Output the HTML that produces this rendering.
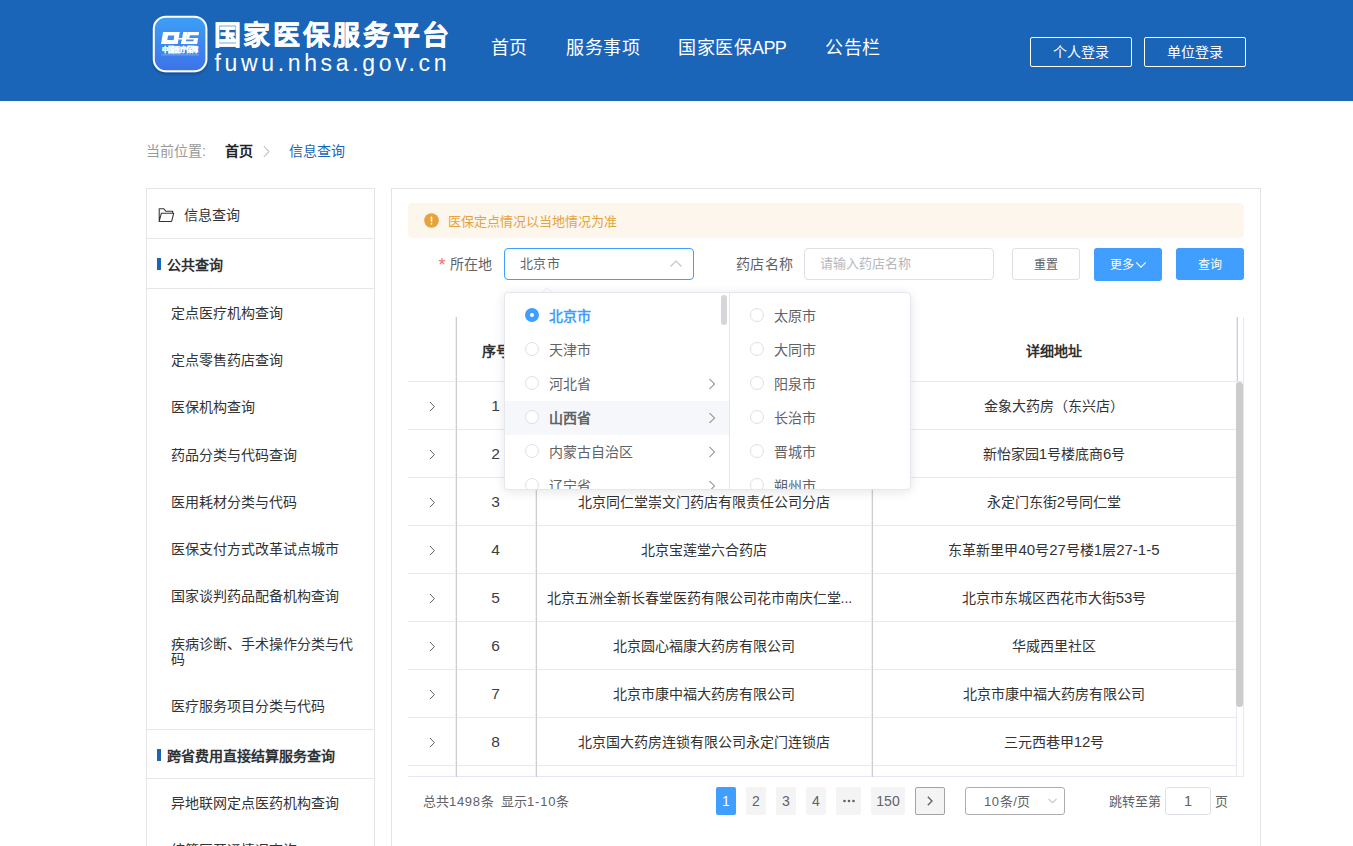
<!DOCTYPE html>
<html lang="zh-CN">
<head>
<meta charset="utf-8">
<title>国家医保服务平台</title>
<style>
*{box-sizing:border-box;margin:0;padding:0}
html,body{width:1353px;height:846px;overflow:hidden;background:#fff}
body{font-family:"Liberation Sans",sans-serif;color:#333;position:relative;font-size:14px}
.abs{position:absolute}
.t{position:absolute;white-space:nowrap;line-height:20px;height:20px}
/* header */
#hdr{left:0;top:0;width:1353px;height:101px;background:#1b65b9}
.nav{color:#fff;font-size:18px;font-weight:500;line-height:24px;height:24px;top:36px;letter-spacing:.5px}
.lbtn{top:37px;height:30px;width:102px;border:1px solid #fff;border-radius:2px;color:#fff;font-size:14px;line-height:28px;text-align:center}
/* sidebar */
#side{left:146px;top:188px;width:229px;height:700px;border:1px solid #e4e4e4;background:#fff}
.shl{position:absolute;left:0;width:227px;height:1px;background:#e6e6e6}
.sbar{position:absolute;left:10px;width:4px;height:12px;background:#1b65b9}
.sti{position:absolute;left:20px;font-size:14px;font-weight:bold;color:#303133;white-space:nowrap;line-height:20px}
.mi{position:absolute;left:24px;width:185px;font-size:14px;color:#333;line-height:15px}
/* main */
#main{left:391px;top:188px;width:870px;height:700px;border:1px solid #e4e4e4;background:#fff}
#alert{left:408px;top:203px;width:836px;height:35px;background:#fdf6ec;border-radius:4px}
.inp{top:248px;height:32px;border:1px solid #dcdfe6;border-radius:4px;background:#fff}
.btn{top:248px;height:32px;width:68px;border-radius:3px;font-size:12px;font-weight:500;line-height:34px;text-align:center;color:#fff;background:#409eff}
/* table */
.hl{position:absolute;left:408px;width:828px;height:1px;background:#e6e9f2}
.vl{position:absolute;top:317px;height:460px;width:1px;background:#cdcdcf;box-shadow:-1px 0 0 #eceff6}
.c{position:absolute;height:20px;line-height:20px;font-size:14px;color:#333;text-align:center;white-space:nowrap;overflow:hidden}
.c1{left:456px;width:79px;color:#3c3e42;font-size:15.5px}
.c2{left:536px;width:335px}
.c3{left:872px;width:364px}
.n{font-size:15px;line-height:1}
.th{font-weight:bold;color:#303133;font-size:14px}
.ex{position:absolute;left:428px;width:9px;height:13px}
/* dropdown */
#dd{left:504px;top:292px;width:407px;height:198px;background:#fff;border:1px solid #e4e7ed;border-radius:4px;box-shadow:0 2px 12px 0 rgba(0,0,0,.1);overflow:hidden}
.row{position:absolute;left:0;height:34px;width:224px}
.rad{position:absolute;width:14px;height:14px;border:1px solid #dcdfe6;border-radius:50%;background:#fff}
.dl{position:absolute;font-size:14px;color:#606266;line-height:20px;white-space:nowrap}
.chev{position:absolute;width:8px;height:12px}
/* pagination */
.pg{top:787px;height:28px;min-width:20px;border-radius:2px;background:#f4f4f5;color:#606266;font-size:14px;line-height:28px;text-align:center}
</style>
</head>
<body>
<!-- ================= HEADER ================= -->
<div id="hdr" class="abs"></div>
<!-- logo icon -->
<svg class="abs" style="left:150px;top:13px" width="62" height="64" viewBox="0 0 62 64">
  <defs>
    <linearGradient id="lg" x1="0" y1="0" x2="0" y2="1">
      <stop offset="0" stop-color="#3d9ff6"/>
      <stop offset="1" stop-color="#3c72e8"/>
    </linearGradient>
    <filter id="sh" x="-20%" y="-20%" width="140%" height="150%">
      <feGaussianBlur in="SourceAlpha" stdDeviation="1.5"/>
      <feOffset dy="2"/>
      <feComponentTransfer><feFuncA type="linear" slope="0.25"/></feComponentTransfer>
      <feMerge><feMergeNode/><feMergeNode in="SourceGraphic"/></feMerge>
    </filter>
  </defs>
  <rect x="3.8" y="3.8" width="52.6" height="54.4" rx="12" ry="12" fill="url(#lg)" stroke="#fff" stroke-width="2" filter="url(#sh)"/>
  <g fill="#fff" transform="translate(11,30.9) skewX(-10)">
    <path fill-rule="evenodd" d="M0 0H16.7V-11.9H0ZM5.6-3.9H11.9V-8.3H5.6Z"/>
    <rect x="20.1" y="-11.9" width="4.4" height="11.9"/>
    <rect x="16.7" y="-6" width="19.3" height="1.7"/>
    <rect x="24.5" y="-11.9" width="11.5" height="3.2"/>
    <rect x="24.5" y="-8.8" width="2.8" height="3"/>
    <rect x="32" y="-6" width="4" height="6"/>
    <rect x="20.1" y="-2.7" width="15.9" height="2.7"/>
  </g>
  <text x="30.2" y="39.4" font-family="Liberation Sans, sans-serif" font-size="6.3" font-weight="bold" fill="#fff" stroke="#fff" stroke-width=".2" text-anchor="middle">中国医疗保障</text>
  <rect x="11.2" y="41.3" width="37.8" height="1.1" fill="#fff" opacity=".28"/>
</svg>
<div class="t" style="left:213.5px;top:17.5px;font-size:27px;line-height:36px;height:36px;font-weight:bold;color:#fff;letter-spacing:2.85px;-webkit-text-stroke:.45px #fff">国家医保服务平台</div>
<div class="t" style="left:214.5px;top:49px;font-size:23px;line-height:28px;height:28px;color:#fff;letter-spacing:3.65px">fuwu.nhsa.gov.cn</div>
<div class="t nav" style="left:490.5px">首页</div>
<div class="t nav" style="left:566px">服务事项</div>
<div class="t nav" style="left:678px">国家医保<span style="letter-spacing:-.6px">APP</span></div>
<div class="t nav" style="left:825px">公告栏</div>
<div class="abs lbtn" style="left:1030px">个人登录</div>
<div class="abs lbtn" style="left:1144px">单位登录</div>

<!-- ================= BREADCRUMB ================= -->
<div class="t" style="left:146px;top:141px;color:#999;font-size:14px">当前位置:</div>
<div class="t" style="left:225px;top:141px;color:#222;font-size:14px;font-weight:bold">首页</div>
<svg class="abs" style="left:262px;top:145px" width="9" height="13" viewBox="0 0 9 13"><path d="M1.8 1.2 7 6.5 1.8 11.8" fill="none" stroke="#c0c4cc" stroke-width="1.1"/></svg>
<div class="t" style="left:289px;top:141px;color:#1b65b9;font-size:14px">信息查询</div>

<!-- ================= SIDEBAR ================= -->
<div id="side" class="abs">
  <svg class="abs" style="left:11px;top:19px" width="17" height="16" viewBox="0 0 17 16"><path d="M1.2 13.4V.7h4.4l2.4 2.6h6.7v2M1.2 13.4l2.1-8.1h12.4l-2.1 8.1z" fill="none" stroke="#333" stroke-width="1.05" stroke-linejoin="round"/></svg>
  <div class="t" style="left:37px;top:16px;color:#333;font-size:14px">信息查询</div>
  <div class="shl" style="top:49px"></div>
  <div class="sbar" style="top:69px"></div>
  <div class="sti" style="top:66px">公共查询</div>
  <div class="shl" style="top:99px"></div>
  <div class="mi" style="top:117px">定点医疗机构查询</div>
  <div class="mi" style="top:164px">定点零售药店查询</div>
  <div class="mi" style="top:211px">医保机构查询</div>
  <div class="mi" style="top:259px">药品分类与代码查询</div>
  <div class="mi" style="top:306px">医用耗材分类与代码</div>
  <div class="mi" style="top:353px">医保支付方式改革试点城市</div>
  <div class="mi" style="top:400px">国家谈判药品配备机构查询</div>
  <div class="mi" style="top:448px">疾病诊断、手术操作分类与代码</div>
  <div class="mi" style="top:510px">医疗服务项目分类与代码</div>
  <div class="shl" style="top:540px"></div>
  <div class="sbar" style="top:560px"></div>
  <div class="sti" style="top:557px">跨省费用直接结算服务查询</div>
  <div class="shl" style="top:589px"></div>
  <div class="mi" style="top:607px">异地联网定点医药机构查询</div>
  <div class="mi" style="top:654px">统筹区开通情况查询</div>
</div>

<!-- ================= MAIN PANEL ================= -->
<div id="main" class="abs"></div>
<div id="alert" class="abs"></div>
<svg class="abs" style="left:424.4px;top:213.4px" width="15" height="15" viewBox="0 0 15 15"><circle cx="7.5" cy="7.5" r="7.3" fill="#e6a23c"/><rect x="6.75" y="3.5" width="1.5" height="5.4" rx=".7" fill="#fff" opacity=".9"/><circle cx="7.5" cy="10.8" r=".9" fill="#fff" opacity=".9"/></svg>
<div class="t" style="left:448px;top:212px;color:#e6a23c;font-size:13px">医保定点情况以当地情况为准</div>

<!-- form row -->
<div class="t" style="left:438.5px;top:255px;color:#f56c6c;font-size:18px">*</div>
<div class="t" style="left:449.5px;top:254px;color:#606266;font-size:14px;letter-spacing:.4px">所在地</div>
<div class="abs inp" style="left:504px;width:190px;border-color:#409eff"></div>
<div class="t" style="left:520px;top:254px;color:#606266;font-size:13px;letter-spacing:.3px">北京市</div>
<svg class="abs" style="left:669px;top:259px" width="14" height="9" viewBox="0 0 14 9"><path d="M1.5 7.5 7 2l5.5 5.5" fill="none" stroke="#c0c4cc" stroke-width="1.1"/></svg>
<div class="t" style="left:736px;top:254px;color:#606266;font-size:14px;letter-spacing:.4px">药店名称</div>
<div class="abs inp" style="left:804px;width:190px"></div>
<div class="t" style="left:820px;top:254px;color:#b4b7be;font-size:13px">请输入药店名称</div>
<div class="abs btn" style="left:1012px;background:#fff;border:1px solid #dcdfe6;color:#606266;line-height:32px">重置</div>
<div class="abs btn" style="left:1094px;height:33px;padding-right:12px">更多</div>
<svg class="abs" style="left:1134.6px;top:260.6px" width="12" height="8" viewBox="0 0 12 8"><path d="M1.2 1.3 6 6.2l4.8-4.9" fill="none" stroke="#fff" stroke-width="1.1"/></svg>
<div class="abs btn" style="left:1176px">查询</div>

<!-- ================= TABLE ================= -->
<div class="hl" style="top:381px;width:836px"></div>
<div class="hl" style="top:429px"></div>
<div class="hl" style="top:477px"></div>
<div class="hl" style="top:525px"></div>
<div class="hl" style="top:573px"></div>
<div class="hl" style="top:621px"></div>
<div class="hl" style="top:669px"></div>
<div class="hl" style="top:717px"></div>
<div class="hl" style="top:765px"></div>
<div class="hl" style="top:776px;width:836px"></div>
<div class="vl" style="left:456px"></div>
<div class="vl" style="left:536px"></div>
<div class="vl" style="left:872px"></div>
<div class="vl" style="left:1237px;height:64px"></div>
<div class="vl" style="left:1236px;top:382px;height:394px;background:#e6e9f2;box-shadow:none"></div>
<div class="vl" style="left:1243px;background:#e6e9f2;box-shadow:none"></div>
<div class="abs" style="left:1236px;top:382px;width:7px;height:325px;background:#cccccc;border-radius:3.5px"></div>

<div class="c c1 th" style="top:341px">序号</div>
<div class="c c2 th" style="top:341px">药店名称</div>
<div class="c c3 th" style="top:341px">详细地址</div>

<svg class="ex" style="top:400px" viewBox="0 0 9 13"><path d="M1.9 2 6.4 6.6 1.9 11.2" fill="none" stroke="#606266" stroke-width="1"/></svg>
<svg class="ex" style="top:448px" viewBox="0 0 9 13"><path d="M1.9 2 6.4 6.6 1.9 11.2" fill="none" stroke="#606266" stroke-width="1"/></svg>
<svg class="ex" style="top:496px" viewBox="0 0 9 13"><path d="M1.9 2 6.4 6.6 1.9 11.2" fill="none" stroke="#606266" stroke-width="1"/></svg>
<svg class="ex" style="top:544px" viewBox="0 0 9 13"><path d="M1.9 2 6.4 6.6 1.9 11.2" fill="none" stroke="#606266" stroke-width="1"/></svg>
<svg class="ex" style="top:592px" viewBox="0 0 9 13"><path d="M1.9 2 6.4 6.6 1.9 11.2" fill="none" stroke="#606266" stroke-width="1"/></svg>
<svg class="ex" style="top:640px" viewBox="0 0 9 13"><path d="M1.9 2 6.4 6.6 1.9 11.2" fill="none" stroke="#606266" stroke-width="1"/></svg>
<svg class="ex" style="top:688px" viewBox="0 0 9 13"><path d="M1.9 2 6.4 6.6 1.9 11.2" fill="none" stroke="#606266" stroke-width="1"/></svg>
<svg class="ex" style="top:736px" viewBox="0 0 9 13"><path d="M1.9 2 6.4 6.6 1.9 11.2" fill="none" stroke="#606266" stroke-width="1"/></svg>

<div class="c c1" style="top:396px">1</div>
<div class="c c1" style="top:444px">2</div>
<div class="c c1" style="top:492px">3</div>
<div class="c c1" style="top:540px">4</div>
<div class="c c1" style="top:588px">5</div>
<div class="c c1" style="top:636px">6</div>
<div class="c c1" style="top:684px">7</div>
<div class="c c1" style="top:732px">8</div>

<div class="c c2" style="top:396px">北京金象大药房医药连锁有限责任公司东兴店</div>
<div class="c c2" style="top:444px">北京新怡家园大药房有限公司</div>
<div class="c c2" style="top:492px">北京同仁堂崇文门药店有限责任公司分店</div>
<div class="c c2" style="top:540px">北京宝莲堂六合药店</div>
<div class="c c2" style="top:588px;left:546.5px;width:320px;text-align:left">北京五洲全新长春堂医药有限公司花市南庆仁堂...</div>
<div class="c c2" style="top:636px">北京圆心福康大药房有限公司</div>
<div class="c c2" style="top:684px">北京市康中福大药房有限公司</div>
<div class="c c2" style="top:732px">北京国大药房连锁有限公司永定门连锁店</div>

<div class="c c3" style="top:396px">金象大药房（东兴店）</div>
<div class="c c3" style="top:444px">新怡家园<span class="n">1</span>号楼底商<span class="n">6</span>号</div>
<div class="c c3" style="top:492px">永定门东街<span class="n">2</span>号同仁堂</div>
<div class="c c3" style="top:540px">东革新里甲<span class="n">40</span>号<span class="n">27</span>号楼<span class="n">1</span>层<span class="n">27-1-5</span></div>
<div class="c c3" style="top:588px">北京市东城区西花市大街<span class="n">53</span>号</div>
<div class="c c3" style="top:636px">华威西里社区</div>
<div class="c c3" style="top:684px">北京市康中福大药房有限公司</div>
<div class="c c3" style="top:732px">三元西巷甲<span class="n">12</span>号</div>

<!-- ================= PAGINATION ================= -->
<div class="t" style="left:423px;top:792px;color:#606266;font-size:13px">总共<span style="letter-spacing:.7px">1498</span>条&nbsp; 显示<span style="letter-spacing:.8px">1-10</span>条</div>
<div class="abs pg" style="left:716px;width:20px;background:#409eff;color:#fff">1</div>
<div class="abs pg" style="left:746px;width:20px">2</div>
<div class="abs pg" style="left:776px;width:20px">3</div>
<div class="abs pg" style="left:806px;width:20px">4</div>
<div class="abs pg" style="left:836px;width:25px"></div>
<svg class="abs" style="left:842px;top:799px" width="14" height="4" viewBox="0 0 14 4"><circle cx="2.5" cy="2" r="1.3" fill="#606266"/><circle cx="7" cy="2" r="1.3" fill="#606266"/><circle cx="11.5" cy="2" r="1.3" fill="#606266"/></svg>
<div class="abs pg" style="left:871px;width:34px">150</div>
<div class="abs pg" style="left:915px;width:30px;border:1px solid #a3a3a3"></div>
<svg class="abs" style="left:926px;top:795px" width="8" height="12" viewBox="0 0 8 12"><path d="M1.8 1.8 6 6 1.8 10.2" fill="none" stroke="#5a5e66" stroke-width="1.3"/></svg>
<div class="abs" style="left:965px;top:787px;width:100px;height:28px;border:1px solid #adadad;border-radius:3px;background:#fff"></div>
<div class="t" style="left:984px;top:791.5px;color:#606266;font-size:13px;letter-spacing:.6px">10条/页</div>
<svg class="abs" style="left:1047.2px;top:797px" width="11" height="8" viewBox="0 0 11 8"><path d="M1.5 1.8 5.5 5.8 9.5 1.8" fill="none" stroke="#c0c4cc" stroke-width="1.1"/></svg>
<div class="t" style="left:1109px;top:792px;color:#606266;font-size:13px">跳转至第</div>
<div class="abs" style="left:1165px;top:787px;width:46px;height:28px;border:1px solid #dcdfe6;border-radius:3px;background:#fff;text-align:center;font-size:14.5px;line-height:26px;color:#606266">1</div>
<div class="t" style="left:1215px;top:792px;color:#606266;font-size:13px">页</div>

<!-- ================= CASCADER DROPDOWN ================= -->
<svg class="abs" style="left:539.5px;top:286.5px" width="14" height="7" viewBox="0 0 14 7"><path d="M.5 7 7 .8 13.5 7" fill="#fff" stroke="#e9ecf2" stroke-width="1"/></svg>
<div id="dd" class="abs">
  <div class="abs" style="left:0;top:108px;width:224px;height:34px;background:#f5f7fa"></div>
  <div class="abs" style="left:224px;top:0;width:1px;height:198px;background:#e4e7ed"></div>
  <div class="abs" style="left:216px;top:2px;width:6px;height:30px;background:#d4d6da;border-radius:3px"></div>

  <div class="rad" style="left:20px;top:15px;border:5px solid #409eff"></div>
  <div class="dl" style="left:44px;top:13px;color:#409eff;font-weight:bold">北京市</div>
  <div class="rad" style="left:20px;top:49px"></div>
  <div class="dl" style="left:44px;top:47px">天津市</div>
  <div class="rad" style="left:20px;top:83px"></div>
  <div class="dl" style="left:44px;top:81px">河北省</div>
  <div class="rad" style="left:20px;top:117px"></div>
  <div class="dl" style="left:44px;top:115px;font-weight:bold">山西省</div>
  <div class="rad" style="left:20px;top:151px"></div>
  <div class="dl" style="left:44px;top:149px">内蒙古自治区</div>
  <div class="rad" style="left:20px;top:185px"></div>
  <div class="dl" style="left:44px;top:183px">辽宁省</div>
  <svg class="chev" style="left:203px;top:85px" viewBox="0 0 8 12"><path d="M1.5 1 6.5 6 1.5 11" fill="none" stroke="#606266" stroke-width="1"/></svg>
  <svg class="chev" style="left:203px;top:119px" viewBox="0 0 8 12"><path d="M1.5 1 6.5 6 1.5 11" fill="none" stroke="#606266" stroke-width="1"/></svg>
  <svg class="chev" style="left:203px;top:153px" viewBox="0 0 8 12"><path d="M1.5 1 6.5 6 1.5 11" fill="none" stroke="#606266" stroke-width="1"/></svg>
  <svg class="chev" style="left:203px;top:187px" viewBox="0 0 8 12"><path d="M1.5 1 6.5 6 1.5 11" fill="none" stroke="#606266" stroke-width="1"/></svg>

  <div class="rad" style="left:245px;top:15px"></div>
  <div class="dl" style="left:269px;top:13px">太原市</div>
  <div class="rad" style="left:245px;top:49px"></div>
  <div class="dl" style="left:269px;top:47px">大同市</div>
  <div class="rad" style="left:245px;top:83px"></div>
  <div class="dl" style="left:269px;top:81px">阳泉市</div>
  <div class="rad" style="left:245px;top:117px"></div>
  <div class="dl" style="left:269px;top:115px">长治市</div>
  <div class="rad" style="left:245px;top:151px"></div>
  <div class="dl" style="left:269px;top:149px">晋城市</div>
  <div class="rad" style="left:245px;top:185px"></div>
  <div class="dl" style="left:269px;top:183px">朔州市</div>
</div>
</body>
</html>
